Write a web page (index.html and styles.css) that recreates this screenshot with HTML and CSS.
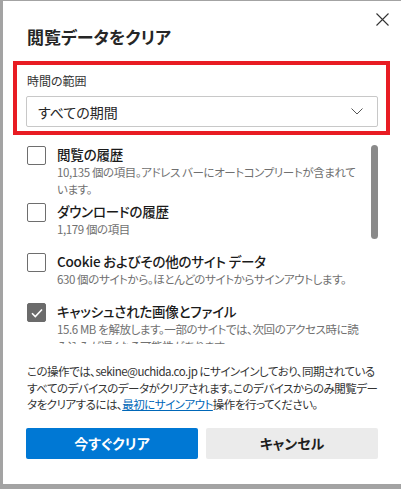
FILE: index.html
```html
<!DOCTYPE html>
<html lang="ja">
<head>
    <meta charset="UTF-8">
    <title>閲覧データをクリア</title>
    <link rel="stylesheet" href="styles.css">
</head>
<body>

<div class="dialog">
    <button class="close" type="button" aria-label="閉じる">
        <svg width="13" height="13" viewBox="0 0 13 13">
            <path d="M0.5 0.5 L12.5 12.5 M12.5 0.5 L0.5 12.5" stroke="#333" stroke-width="1.1" fill="none"/>
        </svg>
    </button>

    <h2 class="title">閲覧データをクリア</h2>

    <div class="range-box">
        <div class="range-label">時間の範囲</div>
        <div class="select">
            <span>すべての期間</span>
            <svg width="12" height="7" viewBox="0 0 12 7">
                <path d="M0.5 0.5 L6 6 L11.5 0.5" stroke="#555" stroke-width="1" fill="none"/>
            </svg>
        </div>
    </div>

    <div class="list">
        <div class="item">
            <span class="box"></span>
            <div class="item-text">
                <div class="item-title">閲覧の履歴</div>
                <div class="item-desc">10,135 個の項目。アドレス バーにオートコンプリートが含まれています。</div>
            </div>
        </div>
        <div class="item">
            <span class="box"></span>
            <div class="item-text">
                <div class="item-title">ダウンロードの履歴</div>
                <div class="item-desc">1,179 個の項目</div>
            </div>
        </div>
        <div class="item">
            <span class="box"></span>
            <div class="item-text">
                <div class="item-title">Cookie およびその他のサイト データ</div>
                <div class="item-desc">630 個のサイトから。ほとんどのサイトからサインアウトします。</div>
            </div>
        </div>
        <div class="item">
            <span class="box checked">
                <svg width="12" height="10" viewBox="0 0 12 10">
                    <path d="M1 5.2 L4.3 8.5 L11 1.5" stroke="#fff" stroke-width="1.6" fill="none"/>
                </svg>
            </span>
            <div class="item-text">
                <div class="item-title">キャッシュされた画像とファイル</div>
                <div class="item-desc">15.6 MB を解放します。一部のサイトでは、次回のアクセス時に読み込みが遅くなる可能性があります。</div>
            </div>
        </div>
        <div class="thumb"></div>
    </div>

    <p class="note">
        この操作では、sekine@uchida.co.jp にサインインしており、同期されているすべてのデバイスのデータがクリアされます。このデバイスからのみ閲覧データをクリアするには、<a href="#">最初にサインアウト</a>操作を行ってください。
    </p>

    <div class="actions">
        <button type="button" class="btn primary">今すぐクリア</button>
        <button type="button" class="btn">キャンセル</button>
    </div>
</div>

</body>
</html>
```

FILE: styles.css
```css
body {
    margin: 0;
    padding: 1px 0 0 3px;
    background: #a3a3a3;
    font-family: "Noto Sans CJK JP", "Noto Sans", sans-serif;
    font-feature-settings: "palt";
    color: #1f1f1f;
}

.dialog {
    position: relative;
    width: 398px;
    height: 483px;
    box-sizing: border-box;
    background: #fff;
    padding: 20px 0 0 24px;
}

.close {
    position: absolute;
    top: 12px;
    right: 12px;
    border: none;
    background: none;
    padding: 0;
    width: 13px;
    height: 13px;
    display: flex;
}

.title {
    margin: 0;
    font-size: 17px;
    font-weight: 600;
    line-height: 32px;
    color: #262626;
}

.range-box {
    margin: 8px 0 0 -14px;
    width: 377px;
    height: 74px;
    box-sizing: border-box;
    border: 4px solid #e81c23;
    padding: 7px 8px 0 9px;
}

.range-label {
    font-size: 12px;
    line-height: 18px;
    color: #333;
    padding-left: 1px;
}

.select {
    margin-top: 6px;
    height: 31px;
    box-sizing: border-box;
    border: 1px solid #c8c8c8;
    border-radius: 2px;
    display: flex;
    align-items: center;
    justify-content: space-between;
    padding: 0 14px 0 11px;
    font-size: 14px;
    color: #262626;
}

.list {
    position: relative;
    margin: 5px 0 0 0;
    width: 351px;
    height: 204px;
    overflow: hidden;
    padding-top: 5px;
    box-sizing: border-box;
}

.item {
    display: flex;
    gap: 11px;
    min-height: 46px;
    margin-bottom: 4px;
}

.box {
    flex: none;
    width: 19px;
    height: 19px;
    box-sizing: border-box;
    border: 1px solid #6e6e6e;
    border-radius: 2px;
    margin-top: 1px;
    display: flex;
    align-items: center;
    justify-content: center;
}

.box.checked {
    background: #6b6b6b;
    border-color: #6b6b6b;
}

.item-text {
    width: 308px;
}

.item-title {
    font-size: 13.5px;
    line-height: 19px;
    font-weight: 500;
    color: #1a1a1a;
    letter-spacing: -0.2px;
}

.item-desc {
    font-size: 11.5px;
    line-height: 17px;
    color: #707070;
    letter-spacing: -0.4px;
}

.thumb {
    position: absolute;
    top: 5px;
    right: 0;
    width: 7px;
    height: 94px;
    border-radius: 4px;
    background: #8a8a8a;
}

.note {
    margin: 19px 0 0 0;
    width: 352px;
    font-size: 11.5px;
    line-height: 16.5px;
    color: #333;
    letter-spacing: -0.5px;
}

.note a {
    color: #0067b8;
    text-decoration: underline;
}

.actions {
    display: flex;
    gap: 8px;
    margin-top: 15px;
    margin-left: -1px;
}

.btn {
    width: 172px;
    height: 31px;
    border: none;
    border-radius: 2px;
    background: #ebebeb;
    color: #1f1f1f;
    font-family: inherit;
    font-feature-settings: "palt";
    font-size: 14px;
    font-weight: 700;
}

.btn.primary {
    background: #0078d4;
    color: #fff;
}
```
